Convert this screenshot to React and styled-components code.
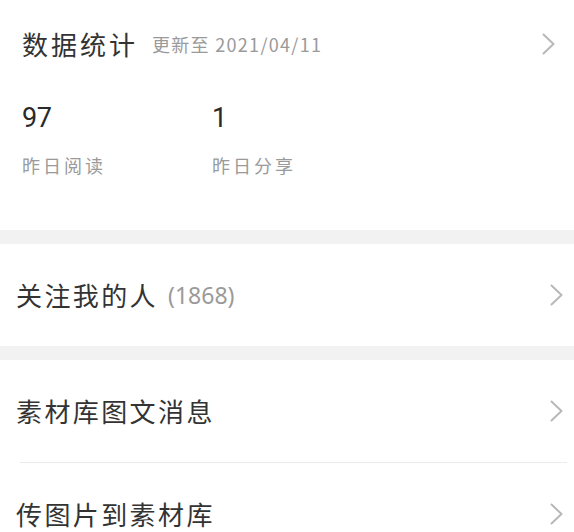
import React from "react";
import styled, { createGlobalStyle } from "styled-components";

const GlobalStyle = createGlobalStyle`
  html, body {
    margin: 0;
    padding: 0;
    background: #ffffff;
  }
  body {
    font-family: "Noto Sans CJK SC", "Noto Sans", sans-serif;
    color: #333333;
  }
`;

const stats = [
  { value: "97", label: "昨日阅读" },
  { value: "1", label: "昨日分享" },
];

const menu = [
  [{ title: "关注我的人", count: 1868 }],
  [{ title: "素材库图文消息" }, { title: "传图片到素材库" }],
];

function Chevron() {
  return (
    <ChevronIcon viewBox="0 0 13 22" width="13" height="22">
      <polyline points="1.5,1.5 11.5,11 1.5,20.5" />
    </ChevronIcon>
  );
}

function App() {
  return (
    <Page>
      <GlobalStyle />
      <StatsCard>
        <Header>
          <Title>数据统计</Title>
          <Updated>更新至 2021/04/11</Updated>
          <Chevron />
        </Header>
        <StatsRow>
          {stats.map((item) => (
            <Stat key={item.label}>
              <StatValue>{item.value}</StatValue>
              <StatLabel>{item.label}</StatLabel>
            </Stat>
          ))}
        </StatsRow>
      </StatsCard>
      {menu.map((group, i) => (
        <React.Fragment key={i}>
          <Band />
          <Group>
            {group.map((row) => (
              <Row key={row.title}>
                <RowText>
                  {row.title}
                  {row.count !== undefined && <Count>({row.count})</Count>}
                </RowText>
                <Chevron />
              </Row>
            ))}
          </Group>
        </React.Fragment>
      ))}
    </Page>
  );
}

const Page = styled.div`
  width: 574px;
  height: 532px;
  overflow: hidden;
  background: #ffffff;
`;

const StatsCard = styled.section`
  height: 230px;
  padding: 0 19px 0 22px;
  box-sizing: border-box;
  display: flex;
  flex-direction: column;
`;

const Header = styled.div`
  height: 88px;
  display: flex;
  align-items: center;
  svg {
    margin-left: auto;
  }
`;

const Title = styled.h2`
  margin: 0;
  font-size: 26px;
  font-weight: 400;
  letter-spacing: 3px;
  color: #333333;
  line-height: 32px;
`;

const Updated = styled.span`
  margin-left: 14px;
  font-size: 18px;
  letter-spacing: 1.3px;
  color: #9a9a9a;
  line-height: 24px;
`;

const StatsRow = styled.div`
  display: grid;
  grid-template-columns: 190px 190px;
  margin-top: 15px;
`;

const Stat = styled.div`
  display: flex;
  flex-direction: column;
  gap: 20px;
`;

const StatValue = styled.span`
  font-family: Roboto, "Noto Sans", sans-serif;
  font-size: 27px;
  font-weight: 400;
  letter-spacing: -0.5px;
  line-height: 30px;
  color: #2a2a2a;
`;

const StatLabel = styled.span`
  font-size: 18px;
  letter-spacing: 3px;
  line-height: 24px;
  color: #9a9a9a;
`;

const Band = styled.div`
  height: 14px;
  background: #f2f2f2;
`;

const Group = styled.div`
  display: flex;
  flex-direction: column;
`;

const Row = styled.div`
  height: 102px;
  padding: 0 11px 0 16px;
  display: flex;
  align-items: center;
  justify-content: space-between;
  & + & {
    border-top: 1px solid #ececec;
    margin-left: 20px;
    margin-right: 7px;
    padding-left: 0;
    padding-right: 4px;
  }
`;

const RowText = styled.span`
  font-size: 26px;
  letter-spacing: 2.4px;
  color: #333333;
  line-height: 32px;
  display: flex;
  align-items: center;
  ${Row} + ${Row} & {
    margin-left: -4px;
  }
`;

const Count = styled.span`
  margin-left: 10px;
  font-family: "Noto Sans", sans-serif;
  font-size: 23px;
  letter-spacing: 0;
  color: #9a9a9a;
`;

const ChevronIcon = styled.svg`
  flex: none;
  fill: none;
  stroke: #b8b8b8;
  stroke-width: 2;
  stroke-linecap: round;
  stroke-linejoin: round;
`;

export default App;
